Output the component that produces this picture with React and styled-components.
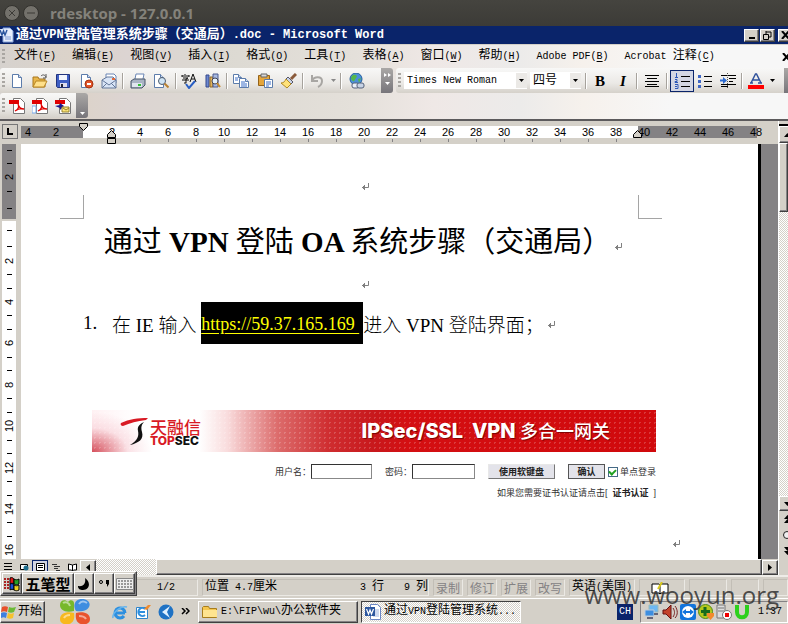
import React from "react";
import styled, { createGlobalStyle, css } from "styled-components";

const FACE = "#d4d0c8";
const NAVY = "#0a246a";
const SHADE = "#848284";
const dither = css`
  background: repeating-conic-gradient(#ffffff 0 25%, #d4d0c8 0 50%) 0 0 / 2px 2px;
`;
const raised = css`
  background: ${FACE};
  border: 1px solid;
  border-color: #ffffff #404040 #404040 #ffffff;
  box-shadow: inset -1px -1px 0 ${SHADE};
`;

const Global = createGlobalStyle`
  * { box-sizing: border-box; }
  body { margin: 0; background: ${FACE}; }
  body, button, input, select {
    font-family: "Liberation Mono", "Noto Sans CJK SC", monospace;
    font-size: 12px;
    color: #000;
  }
  button { padding: 0; border: 0; background: none; }
  svg { display: block; flex: none; }
`;

const Screen = styled.div`
  display: flex;
  flex-direction: column;
  min-height: 100vh;
  overflow: hidden;
  position: relative;
`;

/* Mixed text: half-width Latin runs beside full-width Han characters */
const Run = styled.span`
  white-space: pre;
  line-height: 16px;
`;
const Half = styled.span`
  font-size: ${(p) => p.$size || 10}px;
`;
function T({ children, size }) {
  const parts = String(children).split(/([\x20-\x7e]+)/).filter(Boolean);
  return (
    <Run>
      {parts.map((s, i) =>
        /^[\x20-\x7e]/.test(s) ? <Half key={i} $size={size}>{s}</Half> : <React.Fragment key={i}>{s}</React.Fragment>
      )}
    </Run>
  );
}

/* ---- Host window ---- */
const HostBar = styled.header`
  height: 26px;
  display: flex;
  align-items: center;
  gap: 3px;
  padding-left: 4px;
  background: linear-gradient(#45443f, #3c3b37);
`;
const HostButton = styled.button`
  width: 16px;
  height: 16px;
  border-radius: 50%;
  background: #73716b;
  border: 1px solid #33322e;
  display: grid;
  place-items: center;
`;
const HostTitle = styled.span`
  margin-left: 8px;
  font: 700 15px/20px "Open Sans", "Noto Sans", sans-serif;
  color: #84827b;
`;

/* ---- Word title ---- */
const WordBar = styled.div`
  height: 18px;
  display: flex;
  align-items: center;
  overflow: hidden;
  background: ${NAVY};
  color: #fff;
`;
const WordTitle = styled.h1`
  margin: 0 auto 0 2px;
  font-size: 13px;
  font-weight: 700;
  display: flex;
`;
const CaptionButton = styled.button`
  ${raised}
  flex: none;
  width: 15px;
  height: 13px;
  display: grid;
  place-items: center;
  margin-left: ${(p) => (p.$apart ? 3 : 1)}px;
  margin-right: ${(p) => (p.$apart ? -5 : 0)}px;
`;

const backdrop = css`
  background: linear-gradient(90deg, #d6d2ce 0, #dcd3c9 10%, #dcd4d2 16%, #dcd9d2 28%, #e4e0da 45%, #efe8e6 55%, #ecebea 66%, #f6f1ec 74%, #f7f7f7 85%);
`;
const MenuBar = styled.nav`
  ${backdrop}
  height: 24px;
  border-top: 1px solid ${FACE};
  display: flex;
  align-items: center;
  gap: 16px;
  overflow: hidden;
`;
const MenuItem = styled.button`
  flex: none;
  white-space: pre;
  line-height: 16px;
  &:first-of-type { margin-left: -10px; }
`;
const MenuClose = styled.button`
  margin-left: auto;
  margin-right: -3px;
`;
const Key = styled.u`
  text-underline-offset: 2px;
`;
const Grip = styled.i`
  flex: none;
  width: 3px;
  height: 15px;
  margin: 0 3px 0 2px;
  background: repeating-linear-gradient(#a9a6a2 0 2px, transparent 2px 4px);
`;

/* ---- Toolbars ---- */
const Dock = styled.div`
  ${backdrop}
  display: flex;
  gap: 3px;
  height: ${(p) => p.$h}px;
  overflow: hidden;
`;
const Strip = styled.div`
  display: flex;
  align-items: center;
  flex: none;
  height: 25px;
  border-radius: 3px;
  background: linear-gradient(#f8f8f7, #ebe9e6 60%, #d5d1ca);
`;
const Tool = styled.button`
  flex: none;
  width: ${(p) => p.$w || 24}px;
  height: 22px;
  display: grid;
  place-items: center;
  ${(p) => p.$on && css`background: #d3d6e3; border: 1px solid ${NAVY};`}
`;
const Letter = styled.span`
  font: 700 15px/18px "Liberation Serif", serif;
  font-style: ${(p) => (p.$italic ? "italic" : "normal")};
`;
const Rule = styled.i`
  flex: none;
  width: 2px;
  height: 16px;
  margin: 0 ${(p) => p.$m}px;
  border-left: 1px solid #a6a29c;
  border-right: 1px solid #fff;
`;
const More = styled.button`
  align-self: stretch;
  flex: none;
  width: 12px;
  margin-left: ${(p) => p.$ml || 0}px;
  border-radius: 0 3px 3px 0;
  background: linear-gradient(#aaa8a6, #77757a);
  display: flex;
  flex-direction: column;
  align-items: center;
  justify-content: ${(p) => (p.$two ? "space-evenly" : "flex-end")};
  padding-bottom: 3px;
`;
const Combo = styled.label`
  display: flex;
  align-items: center;
  height: 17px;
  width: ${(p) => p.$w}px;
  margin-right: 3px;
  background: #fff;
`;
const Select = styled.select`
  appearance: none;
  flex: 1;
  min-width: 0;
  border: 0;
  padding: 0 0 0 3px;
  background: transparent;
  font-size: ${(p) => p.$size}px;
  line-height: 16px;
`;
const ComboArrow = styled.span`
  width: 11px;
  height: 15px;
  display: grid;
  place-items: center;
  background: #ebe9e6;
`;

/* ---- Workspace ---- */
const Work = styled.div`
  flex: 1;
  display: flex;
  border-top: 2px solid #5c5a5c;
  background: ${FACE};
  overflow: hidden;
`;
const WorkMain = styled.div`
  flex: 1;
  min-width: 0;
  display: flex;
  flex-direction: column;
`;
const RulerRow = styled.div`
  height: 23px;
  display: flex;
  align-items: flex-start;
  padding-top: 5px;
  position: relative;
`;
const TabBox = styled.button`
  width: 16px;
  height: 15px;
  margin: -2px 3px 0 2px;
  border: 1px solid #777;
  display: grid;
  place-items: center;
`;
const RulerTrack = styled.div`
  flex: 1;
  display: flex;
  font: 11px/12px "Liberation Sans", sans-serif;
  background: linear-gradient(90deg, ${SHADE} 62px, #fff 62px 617px, ${SHADE} 617px 736px, ${FACE} 736px) 0 0 / 100% 12px no-repeat;
`;
const RulerCell = styled.span`
  flex: none;
  width: ${(p) => (p.$first ? 21 : 28)}px;
  padding-right: ${(p) => (p.$first ? 7 : 0)}px;
  display: flex;
  flex-direction: column;
  align-items: center;
  &::after {
    content: "";
    width: 1px;
    height: 3px;
    margin-top: 1px;
    background: ${(p) => (p.$tick ? SHADE : "transparent")};
  }
`;
const Marker = styled.span`
  position: absolute;
  left: ${(p) => p.$x}px;
  top: ${(p) => p.$y}px;
`;
const DocRow = styled.div`
  flex: 1;
  display: flex;
  min-height: 0;
`;
const VRuler = styled.div`
  width: 21px;
  padding: 0 5px 0 2px;
  display: flex;
  flex-direction: column;
  overflow: hidden;
`;
const VTop = styled.div`
  height: 75px;
  margin-bottom: 2px;
  background: ${SHADE};
  display: flex;
  flex-direction: column;
`;
const VBody = styled.div`
  height: 338px;
  background: #fff;
  flex: 1 0 auto;
  overflow: hidden;
`;
const VScale = styled.div`
  height: 350px;
  display: flex;
  flex-direction: column;
`;
const VCell = styled.div`
  flex: ${(p) => (p.$lead ? `0 0 ${p.$lead}px` : "1 1 0")};
  display: flex;
  flex-direction: column;
  align-items: center;
  justify-content: space-evenly;
  font: 11px/14px "Liberation Sans", sans-serif;
  &::before, &::after {
    content: "";
    width: 5px;
    height: 1px;
    background: #000;
  }
  &::after { display: ${(p) => (p.$lead ? "none" : "block")}; }
`;
const VNum = styled.span`
  writing-mode: vertical-rl;
  transform: rotate(180deg);
  height: 14px;
  text-align: center;
`;
const Page = styled.main`
  flex: 1;
  min-width: 0;
  background: #fff;
  border-right: 3px solid #000;
  display: flex;
  flex-direction: column;
  font-family: "Liberation Serif", "Noto Sans CJK SC", serif;
`;
const Desk = styled.div`
  width: 17px;
  background: ${SHADE};
`;
const Center = styled.div`
  height: ${(p) => p.$h}px;
  padding: 0 116px 0 63px;
  display: flex;
  align-items: center;
  justify-content: center;
`;
const Corners = styled.div`
  display: flex;
  justify-content: space-between;
  padding: 0 96px 0 39px;
`;
const Corner = styled.i`
  width: 24px;
  height: 24px;
  border-bottom: 1px solid #a5a5a5;
  ${(p) => (p.$left ? "border-right" : "border-left")}: 1px solid #a5a5a5;
`;
const DocTitle = styled.h2`
  margin: 0;
  font-size: 29px;
  line-height: 44px;
  font-weight: 700;
  white-space: nowrap;
`;
const Han = styled.span`
  font-weight: 400;
`;
const Item = styled.p`
  margin: 0 0 66px;
  padding-left: 62px;
  height: 42px;
  display: flex;
  align-items: center;
  font-size: 19px;
  font-weight: 300;
  white-space: pre;
`;
const ItemNo = styled.span`
  width: 29px;
`;
const Link = styled.a`
  align-self: stretch;
  width: 162px;
  background: #000;
  color: #ff0;
  font-size: 18px;
  font-weight: 400;
  line-height: 44px;
  text-decoration: underline 1px #ff0;
  text-underline-offset: 3px;
`;
const MarkBox = styled.span`
  padding: ${(p) => p.$pt || 0}px 0 0 3px;
`;
const LastMark = styled.div`
  display: flex;
  justify-content: flex-end;
  margin: auto 78px 11px 0;
`;

/* ---- Login picture content ---- */
const Login = styled.form`
  margin: 0 102px 0 71px;
  font: 9px "Liberation Sans", "Noto Sans CJK SC", sans-serif;
  color: #333;
`;
const Banner = styled.div`
  height: 42px;
  display: flex;
  align-items: center;
  padding: 0 46px 0 28px;
  background:
    radial-gradient(#ffffff30 1px, transparent 1px) 0 0 / 5px 5px,
    radial-gradient(ellipse 60px 40px at 0 100%, #d5505c, #f6c8d080 60%, transparent),
    linear-gradient(90deg, #fff1f3 0, #fff 8%, #fff 19%, #f9dcdd 24%, #dc6b6b 33%, #cf2d30 42%, #c8181c 50%, #d40f12 56%, #d0090c 100%);
`;
const Brand = styled.div`
  margin: 6px auto 0 2px;
  display: flex;
  flex-direction: column;
`;
const BrandHan = styled.span`
  font-size: 17px;
  line-height: 14px;
  font-weight: 500;
  color: #d81a24;
`;
const BrandLatin = styled.span`
  font: 800 12px/10px Inter, sans-serif;
  color: ${(p) => (p.$red ? "#d81a24" : "#111")};
`;
const BannerText = styled.span`
  font: 800 20px/24px Inter, "Noto Sans CJK SC", sans-serif;
  color: #fff;
  text-shadow: 1px 1px 1px #7a0000;
  white-space: pre;
`;
const BannerHan = styled.span`
  font-size: 18px;
  font-weight: 500;
`;
const FormRow = styled.div`
  display: flex;
  justify-content: flex-end;
  align-items: center;
  height: 17px;
  margin-top: 11px;
`;
const Field = styled.label`
  display: flex;
  align-items: center;
  margin-right: 13px;
`;
const TextBox = styled.input`
  width: ${(p) => p.$w}px;
  height: 15px;
  padding: 0 2px;
  border: 1px solid;
  border-color: #333 #888 #888 #333;
  background: #fff;
`;
const FormButton = styled.button`
  width: ${(p) => p.$w}px;
  height: 15px;
  margin-right: ${(p) => (p.$main ? 3 : 13)}px;
  font: 700 9px "Noto Sans CJK SC", sans-serif;
  color: #222;
  background: #e3e3ea;
  border: 1px solid;
  border-color: ${(p) => (p.$main ? "#555" : "#e8e8e8 #777 #777 #e8e8e8")};
`;
const Check = styled.input`
  appearance: none;
  margin: 0 2px 0 0;
  width: 10px;
  height: 10px;
  border: 1px solid #456a86;
  display: grid;
  place-items: center;
  &:checked::after {
    content: "";
    width: 3px;
    height: 5px;
    margin-bottom: 2px;
    border: solid #21a121;
    border-width: 0 2px 2px 0;
    transform: rotate(45deg);
  }
`;
const CertRow = styled.div`
  margin-top: 7px;
  text-align: right;
  line-height: 13px;
  white-space: pre;
`;
const CertLink = styled.a`
  color: #222;
  font-weight: 700;
  text-decoration: none;
`;

/* ---- Scroll bars ---- */
const VScroll = styled.div`
  width: 10px;
  display: flex;
  flex-direction: column;
  overflow: hidden;
  border-left: 1px solid #fff;
`;
const Split = styled.i`
  height: 5px;
  border-bottom: 2px solid #000;
`;
const ScrollButton = styled.button`
  ${raised}
  flex: none;
  width: 16px;
  height: ${(p) => p.$h || 15}px;
  display: grid;
  place-items: center;
`;
const Track = styled.div`
  ${dither}
  flex: 1;
  display: flex;
`;
const VThumb = styled.div`
  ${raised}
  width: 16px;
  height: 69px;
`;
const BrowseButton = styled.button`
  width: 16px;
  height: 16px;
  display: grid;
  place-items: center;
`;
const HRow = styled.div`
  height: 16px;
  display: flex;
  align-items: center;
`;
const ViewButton = styled.button`
  width: 16px;
  height: 15px;
  display: grid;
  place-items: center;
  ${(p) => p.$on && css`background: #d3d6e3; border: 1px solid ${NAVY};`}
`;
const HTrack = styled.div`
  ${dither}
  flex: 1;
  height: 16px;
  padding-left: 60px;
`;
const HThumb = styled.div`
  ${raised}
  height: 16px;
`;

/* ---- Status bar ---- */
const Status = styled.footer`
  height: 23px;
  display: flex;
  align-items: center;
  gap: 4px;
  border-top: 2px solid #eeece8;
  background: ${FACE};
  padding: 2px 0 2px 1px;
  overflow: hidden;
`;
const Cell = styled.span`
  flex: ${(p) => (p.$grow ? 1 : "none")};
  width: ${(p) => p.$w || 30}px;
  height: 17px;
  display: flex;
  align-items: center;
  gap: 20px;
  padding-left: ${(p) => p.$pl || 2}px;
  border: 1px solid;
  border-color: #c2beb6 #ebe9e4 #ebe9e4 #c2beb6;
  color: ${(p) => (p.$dim ? SHADE : "#000")};
`;
const Push = styled.span`
  margin-left: auto;
`;
const Ime = styled.div`
  ${raised}
  position: absolute;
  left: 0;
  bottom: 28px;
  display: flex;
  width: 137px;
  height: 25px;
  padding: 1px;
`;
const ImeButton = styled.button`
  ${raised}
  width: ${(p) => p.$w}px;
  display: grid;
  place-items: center;
  font: 700 15px/18px "Noto Sans CJK SC", sans-serif;
`;

/* ---- Task bar ---- */
const TaskBar = styled.footer`
  height: 26px;
  display: flex;
  align-items: center;
  background: ${FACE};
  border-top: 1px solid #fff;
`;
const Start = styled.button`
  ${raised}
  width: 45px;
  height: 22px;
  display: flex;
  align-items: center;
  gap: 1px;
`;
const Quick = styled.div`
  display: flex;
  align-items: center;
  gap: 7px;
  margin: 0 3px 0 15px;
  width: 135px;
`;
const Launch = styled.button`
  flex: none;
  margin-right: ${(p) => p.$mr || 0}px;
`;
const Task = styled.button`
  ${raised}
  flex: 0 1 160px;
  height: 22px;
  margin-right: 3px;
  padding-left: 3px;
  display: flex;
  align-items: center;
  gap: 3px;
  ${(p) => p.$on && css`${dither} border-color: #404040 #fff #fff #404040; box-shadow: none;`}
`;
const Lang = styled.button`
  margin-left: auto;
  width: 16px;
  height: 16px;
  background: ${NAVY};
  color: #fff;
  font-size: 10px;
`;
const Tray = styled.div`
  margin-left: 7px;
  width: 148px;
  height: 22px;
  display: flex;
  align-items: center;
  gap: 2px;
  padding: 0 5px 0 3px;
  border: 1px solid;
  border-color: ${SHADE} #fff #fff ${SHADE};
`;
const Clock = styled.time`
  margin-left: auto;
  font-size: 10px;
`;
const Watermark = styled.div`
  position: absolute;
  right: 9px;
  bottom: 11px;
  font: 24px/36px "Open Sans", "Noto Sans", sans-serif;
  color: #333;
  opacity: 0.85;
  pointer-events: none;
`;

/* ---- Drawings ---- */
const Svg = ({ s = 16, w, h, children }) => (
  <svg width={w || s} height={h || s} viewBox={`0 0 ${w || s} ${h || s}`} fill="none" aria-hidden="true">
    {children}
  </svg>
);
const Down = ({ c = "#000" }) => <Svg w={5} h={3}><path d="M0 0h5L2.500 3z" fill={c} /></Svg>;
const Return = () => (
  <Svg w={8} h={8}><path d="M7.500 0v4.500H1M3.500 2v5M2.500 3v3" stroke="#808080" /></Svg>
);
const Sheet = ({ x = 3, y = 1, w = 10, h = 14 }) => (
  <g>
    <path d={`M${x + 0.5} ${y + 0.5}h${w - 4}l3 3v${h - 4}h-${w - 1}z`} fill="#fff" stroke="#5c7cab" />
    <path d={`M${x + w - 3.5} ${y + 0.5}v3h3`} fill="#cfdcf2" stroke="#5c7cab" />
  </g>
);
const I = {
  blank: <Svg><Sheet /></Svg>,
  open: <Svg><path d="M1 4h5l1 2h6v8H1z" fill="#e8b64a" stroke="#a8761d" /><path d="M1 14l3-6h11l-3 6z" fill="#ffe08a" stroke="#b88624" /><path d="M9 3c2-2 4-1 5 1M14 1v4h-3" stroke="#555" /></Svg>,
  save: <Svg><path d="M1.500 1.500h13v13h-12l-1-1z" fill="#3f5fc4" stroke="#22347e" /><path d="M4 2h8v5H4z" fill="#f2f5fd" /><path d="M5 10h7v4H5z" fill="#dde" /><path d="M6 11h2v3H6z" fill="#223" /></Svg>,
  deny: <Svg><Sheet /><circle cx="11" cy="11" r="4" fill="#e2542a" stroke="#a6330f" /><path d="M9 11h4" stroke="#fff" strokeWidth="2" /></Svg>,
  mail: <Svg><path d="M5 5V1h8l2 2v7" fill="#fff" stroke="#6a86b5" /><path d="M1 7l5-3h6l3 3v8H1z" fill="#d8e4f6" stroke="#64789b" /><path d="M1 7l7 5 7-5M1 15l5-5M15 15l-5-5" stroke="#64789b" /><path d="M11 5h3v2h-3z" fill="#e36b3c" /></Svg>,
  print: <Svg><path d="M5 6l1-5h8l-1 5" fill="#fff" stroke="#6a86b5" /><path d="M1 8l3-2h11v6l-3 3H1z" fill="#a9b4c4" stroke="#475468" /><path d="M2 10h10v4H2z" fill="#dfe6ee" /><path d="M8 11h3v2H8z" fill="#2fc12f" /></Svg>,
  preview: <Svg><Sheet x={1} /><circle cx="9" cy="8" r="3.500" fill="#cfe4f5" stroke="#4c5a6c" /><path d="M11.500 10.500l4 4" stroke="#b98132" strokeWidth="2" /></Svg>,
  spell: <Svg><path d="M1 3h7M1 2v2M8 2v2M4 1v1M2 5h5L5 6v4H3M1 7h7M9 9l3-8 3 8M10 6h4" stroke="#111" /><path d="M5 11l3 4 6-7" stroke="#2a5fc4" strokeWidth="2" /></Svg>,
  research: <Svg><path d="M1 2h3v12H1z" fill="#6c88d0" stroke="#34488c" /><path d="M5 4h3v10H5z" fill="#e5b65b" stroke="#8a672a" /><path d="M8 1h5v13H8z" fill="#a8b9e0" stroke="#4a5b8f" /><circle cx="10" cy="8" r="3" fill="#e2f0fb" stroke="#445" /><path d="M12 10l3 4" stroke="#c58a30" strokeWidth="2" /></Svg>,
  copy: <Svg><Sheet x={0} y={1} w={9} h={10} /><Sheet x={6} y={5} w={10} h={10} /><path d="M8 9h4M8 11h6M8 13h6M2 5h3M2 7h3" stroke="#3d6fc8" /></Svg>,
  paste: <Svg><path d="M1.500 2.500h11v10h-11z" fill="#e4a53c" stroke="#94631a" /><path d="M4 1h6v3H4z" fill="#d9d9d9" stroke="#666" /><path d="M7.500 6.500h8v8h-8z" fill="#fff" stroke="#5c7cab" /><path d="M9 9h5M9 11h5M9 13h3" stroke="#3d6fc8" /></Svg>,
  brush: <Svg><path d="M15 1l-5 5" stroke="#8a5a3a" strokeWidth="3" /><path d="M7 4l5 5-2 2-5-5z" fill="#c9d2e6" stroke="#556" /><path d="M5 6l5 5-4 4-6-5c3 0 4-2 5-4z" fill="#ffe27a" stroke="#b08a25" /></Svg>,
  undo: <Svg><path d="M3 2v6h6M3 8c2-5 10-5 10 0 0 3-2 5-4 6" stroke="#a8a6a3" strokeWidth="2" /></Svg>,
  globe: <Svg><circle cx="7" cy="6" r="6" fill="#4b8fd8" stroke="#24609c" /><path d="M4 2c3-1 5 1 3 3s-1 4-3 3-3-4 0-6zM9 6l3-1-2 5z" fill="#54b848" /><rect x="3" y="10" width="7" height="5" rx="2" stroke="#54617a" fill="#e9eef7" /><rect x="8" y="10" width="7" height="5" rx="2" stroke="#54617a" fill="#c7d3e6" /></Svg>,
  align: <Svg><path d="M1 2.500h14M3 5.500h10M1 8.500h14M3 11.500h10M1 13.500h14" stroke="#000" /></Svg>,
  numbers: <Svg><path d="M7 3.500h9M7 8.500h9M7 13.500h9" stroke="#000" /><path d="M2.500 0v4M1 4.500h3M1 6.500h2v2H1v1h3M1 11.500h3v4H1M1 13.500h2" stroke="#2c57b8" /></Svg>,
  bullets: <Svg><path d="M7 3.500h8M7 8.500h8M7 13.500h8" stroke="#000" /><path d="M1 2h3v3H1zM1 7h3v3H1zM1 12h3v3H1z" fill="#3f66c4" /></Svg>,
  indent: <Svg><path d="M0 7.500h4" stroke="#2c6ad0" strokeWidth="2" /><path d="M3 4l4 3.500L3 11z" fill="#2c6ad0" /><path d="M1 2.500h15M9 5.500h7M9 8.500h4M1 11.500h15M1 13.500h7" stroke="#000" /><path d="M7.500 0v16" stroke="#555" strokeDasharray="1 1" /></Svg>,
  pdf: <Svg><path d="M4.500 .5h7l4 4v11h-11z" fill="#fff" stroke="#777" /><path d="M0 2h10v4H0z" fill="#e00000" /><path d="M6 13c4-2 4-5 3-7 1 4 3 5 6 5-4-1-6 0-9 2z" stroke="#e00000" strokeWidth="1.300" /></Svg>,
  word: <Svg><path d="M5.500 .5h7l3 3v12h-10z" fill="#fff" stroke="#6a86c5" /><path d="M8 6h6M8 8h6M8 10h6M8 12h6" stroke="#9bb2e0" /><path d="M0 3h10v9H0z" fill="#2b569e" /><path d="M1.500 5l2 5L5 6l1.500 4 2-5" stroke="#fff" strokeWidth="1.200" /></Svg>,
  folder: <Svg><path d="M.5 3.500l1-1h5l1 2h7v9H.5z" fill="#f5c64d" stroke="#a87d1c" /><path d="M1 6h14v7H1z" fill="#ffe48f" /></Svg>,
  win: <Svg><path d="M1 3c2-1 4-1 6 0L6 8C4 7 2 7 0 8z" fill="#e8502a" /><path d="M8 3c2 1 4 1 7 0l-2 5c-2 1-4 1-6 0z" fill="#6cba35" /><path d="M0 9c2-1 4-1 6 0l-1 5c-2-1-3-1-5 0z" fill="#3f7fe0" /><path d="M7 9c2 1 4 1 6 0l-1 5c-2 1-4 1-6 0z" fill="#f6c12c" /></Svg>,
};

const PdfOpt = ({ kind }) => (
  <Svg>
    <path d="M4.500 .5h7l4 4v11h-11z" fill="#fff" stroke="#777" /><path d="M0 2h10v4H0z" fill="#e00000" />
    {kind === 1 ? <><path d="M6 13c4-2 4-5 3-7 1 4 3 5 6 5-4-1-6 0-9 2z" stroke="#e00000" strokeWidth="1.300" /><path d="M0 8h4v7H0z" fill="#fff" stroke="#79a8e8" /></>
      : <><path d="M0 8l5-1V5l4 3-4 4v-2z" fill="#1b1b8c" /><path d="M7 9h7v5H7z" fill="#ffe87a" stroke="#94802a" /><path d="M8 10l3 2 3-2" stroke="#94802a" /></>}
  </Svg>
);

const menus = [["文件", "F"], ["编辑", "E"], ["视图", "V"], ["插入", "I"], ["格式", "O"], ["工具", "T"], ["表格", "A"], ["窗口", "W"], ["帮助", "H"], ["Adobe PDF", "B"], ["Acrobat 注释", "C"]];
const hNumbers = [4, 2, "", ...Array.from({ length: 24 }, (_, i) => (i + 1) * 2)];

const Close = () => <Svg w={9} h={8}><path d="M1 0l7 8M8 0L1 8" stroke="#000" strokeWidth="2" /></Svg>;

function WorkArea() {
  return (
    <Work>
      <WorkMain>
        <RulerRow>
          <TabBox aria-label="制表符"><Svg w={8} h={8}><path d="M2 0v6h5" stroke="#000" strokeWidth="2" /></Svg></TabBox>
          <RulerTrack>
            {hNumbers.map((n, i) => <RulerCell key={i} $first={i === 0} $tick={i > 3 && i < 22}>{n === "" ? "\u00a0" : n}</RulerCell>)}
          </RulerTrack>
          <Marker $x={79} $y={2}><Svg w={9} h={8}><path d="M.5 .5h8v3l-4 4-4-4z" fill={FACE} stroke="#000" /></Svg></Marker>
          <Marker $x={107} $y={8}><Svg w={9} h={15}><path d="M.5 8.500v-3l4-4 4 4v3zM.5 9.500h8v5h-8z" fill={FACE} stroke="#000" /></Svg></Marker>
          <Marker $x={633} $y={9}><Svg w={9} h={8}><path d="M.5 7.500v-3l4-4 4 4v3z" fill={FACE} stroke="#000" /></Svg></Marker>
        </RulerRow>
        <DocRow>
          <VRuler>
            <VTop><VCell $lead={12} /><VCell><VNum>2</VNum></VCell><VCell $lead={21} /></VTop>
            <VBody>
              <VScale>
                <VCell $lead={19} />
                {[2, 4, 6, 8, 10, 12, 14, 16].map((n) => <VCell key={n}><VNum>{n}</VNum></VCell>)}
              </VScale>
            </VBody>
          </VRuler>
          <Page>
            <Center $h={51}><MarkBox $pt={35}><Return /></MarkBox></Center>
            <Corners><Corner $left /><Corner /></Corners>
            <Center $h={45}>
              <DocTitle><Han>通过</Han> VPN <Han>登陆</Han> OA <Han>系统步骤（交通局）</Han></DocTitle>
              <MarkBox $pt={10}><Return /></MarkBox>
            </Center>
            <Center $h={38}><MarkBox $pt={3}><Return /></MarkBox></Center>
            <Item>
              <ItemNo>1.</ItemNo>在 IE 输入 <Link href="https://59.37.165.169">https://59.37.165.169 </Link>进入 VPN 登陆界面；<MarkBox $pt={4}><Return /></MarkBox>
            </Item>
            <Login onSubmit={(e) => e.preventDefault()}>
              <Banner>
                <Svg w={28} h={28}><path d="M1 6C9 2 18 1 28 1L26 3C17 4 10 6 3 9 1 9 0 7 1 6z" fill="#d81a24" /><path d="M24 5c-4 2-7 4-6 9 1 5 0 9-8 14 9-2 14-6 12-13-1-4-1-7 2-10z" fill="#111" /></Svg>
                <Brand>
                  <BrandHan>天融信</BrandHan>
                  <span><BrandLatin $red>TOP</BrandLatin><BrandLatin>SEC</BrandLatin></span>
                </Brand>
                <BannerText>IPSec/SSL  VPN <BannerHan>多合一网关</BannerHan></BannerText>
              </Banner>
              <FormRow>
                <Field>用户名：<TextBox $w={61} type="text" /></Field>
                <Field>密码：<TextBox $w={63} type="password" /></Field>
                <FormButton type="button" $w={67}>使用软键盘</FormButton>
                <FormButton type="submit" $w={37} $main>确认</FormButton>
                <Check id="single" type="checkbox" defaultChecked /><label htmlFor="single">单点登录</label>
              </FormRow>
              <CertRow>如果您需要证书认证请点击[  <CertLink href="#cert">证书认证</CertLink>  ]</CertRow>
            </Login>
            <LastMark><Return /></LastMark>
          </Page>
          <Desk />
        </DocRow>
        <HRow>
          <ViewButton aria-label="普通视图"><Svg w={8} h={8}><path d="M0 .5h8M0 3.500h8M0 6.500h8" stroke="#000" /></Svg></ViewButton>
          <ViewButton aria-label="Web 版式"><Svg w={9} h={8}><path d="M.5 1.500h7v5h-7z" fill="#fff" stroke="#000" /><circle cx="6" cy="5" r="2.500" fill="#1c6c8c" /></Svg></ViewButton>
          <ViewButton $on aria-label="页面视图"><Svg w={9} h={8}><path d="M.5 .5h8v7h-8z" fill="#fff" stroke="#000" /><path d="M2 2.500h5M2 4.500h5" stroke="#000" /></Svg></ViewButton>
          <ViewButton aria-label="大纲视图"><Svg w={8} h={8}><path d="M0 1.500h5M2 3.500h6M2 5.500h4M4 7.500h4" stroke="#333" /></Svg></ViewButton>
          <ViewButton aria-label="阅读版式"><Svg w={9} h={8}><path d="M.5 1l4 1 4-1v6h-3l-1 1-1-1h-3zM4.500 2v6" fill="#fff" stroke="#000" /></Svg></ViewButton>
          <ScrollButton aria-label="向左"><Svg w={4} h={7}><path d="M4 0v7L0 3.500z" fill="#000" /></Svg></ScrollButton>
          <HTrack><HThumb /></HTrack>
          <ScrollButton aria-label="向右"><Svg w={4} h={7}><path d="M0 0v7l4-3.500z" fill="#000" /></Svg></ScrollButton>
        </HRow>
      </WorkMain>
      <VScroll>
        <Split />
        <ScrollButton $h={17} aria-label="向上"><Svg w={7} h={4}><path d="M0 4h7L3.500 0z" fill="#000" /></Svg></ScrollButton>
        <Track><VThumb /></Track>
        <ScrollButton aria-label="向下"><Svg w={7} h={4}><path d="M0 0h7L3.500 4z" fill="#000" /></Svg></ScrollButton>
        <BrowseButton aria-label="上一页"><Svg w={7} h={8}><path d="M0 4h7L3.500 0zM0 8h7L3.500 4z" fill="#000" /></Svg></BrowseButton>
        <BrowseButton aria-label="选择浏览对象"><Svg w={8} h={8}><circle cx="4" cy="4" r="3.500" fill="#eee" stroke="#222" /></Svg></BrowseButton>
        <BrowseButton aria-label="下一页"><Svg w={7} h={8}><path d="M0 0h7L3.500 4zM0 4h7L3.500 8z" fill="#000" /></Svg></BrowseButton>
        <HRow />
      </VScroll>
    </Work>
  );
}

export default function App() {
  return (
    <Screen>
      <Global />
      <HostBar>
        <HostButton aria-label="关闭"><Svg w={6} h={6}><path d="M0 0l6 6M6 0L0 6" stroke="#3c3b37" /></Svg></HostButton>
        <HostButton aria-label="最小化"><Svg w={8} h={2}><path d="M0 1h8" stroke="#3c3b37" /></Svg></HostButton>
        <HostTitle>rdesktop - 127.0.0.1</HostTitle>
      </HostBar>
      <WordBar>
        <Svg w={14} h={16}><path d="M3 1h7l3 3v11H3z" fill="#e8effc" stroke="#89a6dc" /><path d="M5 10h6M5 12h6" stroke="#7c9ad6" /><path d="M0 2h8v7H0z" fill="#dce6fa" /><path d="M0 3l2 5 1.500-4L5 8l2-5" stroke="#2b569e" strokeWidth="1.400" /></Svg>
        <WordTitle><T size={12}>通过VPN登陆管理系统步骤（交通局）.doc - Microsoft Word</T></WordTitle>
        <CaptionButton aria-label="最小化"><Svg w={8} h={8}><path d="M1 7h6" stroke="#000" strokeWidth="2" /></Svg></CaptionButton>
        <CaptionButton aria-label="还原"><Svg w={9} h={9}><path d="M3 1h5v5H6M3 0v3M.5 3.500h5v5h-5z" stroke="#000" /></Svg></CaptionButton>
        <CaptionButton $apart aria-label="关闭"><Close /></CaptionButton>
      </WordBar>
      <MenuBar>
        <Grip />
        {menus.map(([name, key]) => (
          <MenuItem key={key}><T>{name + "("}</T><Half><Key>{key}</Key>)</Half></MenuItem>
        ))}
        <MenuClose aria-label="关闭文档"><Close /></MenuClose>
      </MenuBar>
      <Dock $h={25}>
        <Strip>
          <Grip />
          <Tool $w={17} aria-label="新建">{I.blank}</Tool>
          <Tool $w={30} aria-label="打开">{I.open}</Tool>
          <Tool $w={16} aria-label="保存">{I.save}</Tool>
          <Tool $w={30} aria-label="权限">{I.deny}</Tool>
          <Tool $w={16} aria-label="电子邮件">{I.mail}</Tool>
          <Rule $m={5} />
          <Tool $w={18} aria-label="打印">{I.print}</Tool>
          <Tool $w={28} aria-label="预览">{I.preview}</Tool>
          <Rule $m={0} />
          <Tool aria-label="拼写">{I.spell}</Tool>
          <Tool aria-label="信息检索">{I.research}</Tool>
          <Rule $m={1} />
          <Tool aria-label="复制">{I.copy}</Tool>
          <Tool aria-label="粘贴">{I.paste}</Tool>
          <Tool aria-label="格式刷">{I.brush}</Tool>
          <Rule $m={1} />
          <Tool aria-label="撤消">{I.undo}</Tool>
          <Tool $w={8} aria-label="撤消列表"><Down c="#888" /></Tool>
          <Rule $m={3} />
          <Tool aria-label="超链接">{I.globe}</Tool>
          <More $two $ml={12} aria-label="工具栏选项"><Svg w={7} h={4}><path d="M0 0l3 2-3 2zM4 0l3 2-3 2z" fill="#fff" /></Svg><Down c="#fff" /></More>
        </Strip>
        <Strip>
          <Grip />
          <Combo $w={123}>
            <Select $size={10} aria-label="字体"><option>Times New Roman</option></Select>
            <ComboArrow><Down /></ComboArrow>
          </Combo>
          <Combo $w={51}>
            <Select $size={12} aria-label="字号"><option>四号</option></Select>
            <ComboArrow><Down /></ComboArrow>
          </Combo>
          <Rule $m={1} />
          <Tool aria-label="加粗"><Letter>B</Letter></Tool>
          <Tool $w={22} aria-label="倾斜"><Letter $italic>I</Letter></Tool>
          <Rule $m={2} />
          <Tool aria-label="居中">{I.align}</Tool>
          <Rule $m={2} />
          <Tool $on aria-label="编号">{I.numbers}</Tool>
          <Tool $w={22} aria-label="项目符号">{I.bullets}</Tool>
          <Tool aria-label="增加缩进">{I.indent}</Tool>
          <Rule $m={1} />
          <Tool aria-label="字体颜色"><Svg><path d="M3 10L7.500 1h1L13 10M5 7h6M2 10h3M10 10h4" stroke="#31529c" strokeWidth="1.500" /><path d="M0 12h16v4H0z" fill="#f00" /></Svg></Tool>
          <Tool $w={8} aria-label="颜色列表"><Down /></Tool>
          <More $ml={8} aria-label="格式选项" />
        </Strip>
      </Dock>
      <Dock $h={26}>
        <Strip>
          <Grip />
          <Tool $w={18} aria-label="转换为 PDF">{I.pdf}</Tool>
          <Tool $w={28} aria-label="PDF 设置"><PdfOpt kind={1} /></Tool>
          <Tool $w={18} aria-label="PDF 邮件"><PdfOpt kind={2} /></Tool>
          <More $ml={4} aria-label="PDF 选项"><Down c="#fff" /></More>
        </Strip>
      </Dock>
      <WorkArea />
      <Status>
        <Cell $w={197} $pl={155}><T>1/2</T></Cell>
        <Cell $grow><T>位置 4.7厘米</T><Push><T>3 行</T></Push><T>9 列</T></Cell>
        <Cell $dim>录制</Cell>
        <Cell $dim>修订</Cell>
        <Cell $dim>扩展</Cell>
        <Cell $dim>改写</Cell>
        <Cell $w={66}><T>英语(美国)</T></Cell>
        <Cell $w={46} $pl={11}><Svg w={18} h={12}><path d="M1 2h7l1 1 1-1h7v9h-7l-1 1-1-1H1zM9 3v8" fill="#fff" stroke="#000" /><path d="M11 0L7 7" stroke="#d8c81c" strokeWidth="2" /></Svg></Cell>
        <Cell $w={38} />
        <Cell $w={28} />
        <Cell $w={25} />
      </Status>
      <TaskBar>
        <Start>{I.win}<T>开始</T></Start>
        <Quick>
          <Launch $mr={15} aria-label="Office">
            <Svg w={30} h={26}><path d="M14 12C5 14 0 11 0 6 0 1 5 0 8 3c2-3 6-2 6 1z" fill="#77b82a" /><path d="M16 12C12 5 16 0 22 0s9 4 7 8-8 5-13 4z" fill="#3f8de0" /><path d="M14 14C6 12 0 15 0 20s5 6 9 5 6-5 5-11z" fill="#f8b81e" /><path d="M16 14c8-2 14 1 14 6s-5 6-9 5-6-5-5-11z" fill="#e9532c" /><path d="M3 4c3-2 6 0 7 3M19 5c2-3 5-3 8-1M4 19c1-2 3-3 6-3M19 17c3 0 6 1 7 3" stroke="#ffffff80" strokeWidth="2" /></Svg>
          </Launch>
          <Launch aria-label="Internet Explorer"><Svg><path d="M13 9H4M13 9a5 5 0 1 0-1 3" stroke="#2d8fdf" strokeWidth="3" /><path d="M1 14C0 9 9 1 15 3" stroke="#64b4ee" strokeWidth="1.500" /></Svg></Launch>
          <Launch aria-label="Outlook"><Svg><path d="M1.500 3.500h11v11h-11z" fill="#fff" stroke="#2f83c8" /><path d="M10 5a4 4 0 1 0 0 6M4 8h6" stroke="#2d8fdf" strokeWidth="2" /><path d="M9 5l4-4h3l-4 5z" fill="#f08a2c" /></Svg></Launch>
          <Launch aria-label="桌面"><Svg><circle cx="8" cy="8" r="7.500" fill="#1f72c4" /><path d="M12 2L4 8l8 6-3-6z" fill="#dff0ff" /></Svg></Launch>
          <Launch aria-label="更多"><Svg w={9} h={7}><path d="M1 0l3 3-3 3M5 0l3 3-3 3" stroke="#000" strokeWidth="1.500" /></Svg></Launch>
        </Quick>
        <Task>{I.folder}<T>E:\FIP\wu\办公软件夹</T></Task>
        <Task $on>{I.word}<T>通过VPN登陆管理系统...</T></Task>
        <Lang>CH</Lang>
        <Tray>
          <Svg><path d="M5 1h9v7H5z" fill="#6cb8f4" stroke="#9bb" /><path d="M1 6h9v6H1z" fill="#3d8fe0" stroke="#bcd" /><path d="M3 14h6M10 10h4" stroke="#667" strokeWidth="2" /></Svg>
          <Svg><path d="M1 6h3l5-5v14l-5-5H1z" fill="#c4442c" stroke="#611" /><path d="M11 4c2 3 2 6 0 9M13 2c3 4 3 9 0 12" stroke="#722" /></Svg>
          <Svg><rect width="16" height="16" rx="2" fill="#1274dc" /><circle cx="8" cy="8" r="6" fill="#fff" /><path d="M2 8l4-3v2h4V5l4 3-4 3V9H6v2z" fill="#1274dc" /></Svg>
          <Svg><circle cx="7.500" cy="7.500" r="7" fill="#b5c81c" stroke="#4e8a1a" /><path d="M7 3v9M3 7.500h9" stroke="#176b1c" strokeWidth="3" /><path d="M9 9h7v3l-3.500 4L9 12z" fill="#f28a2c" /></Svg>
          <Svg><path d="M1 1h8v13H1z" fill="#ddd" stroke="#777" /><path d="M2 4h6M2 7h6" stroke="#777" /><circle cx="11" cy="11" r="4.500" fill="#fff" stroke="#777" /><path d="M9 9h4v4H9z" fill="#e00" /></Svg>
          <Svg><path d="M3 1v7c0 7 10 7 10 0V1" stroke="#2ed01c" strokeWidth="4" /></Svg>
          <Clock>1:37</Clock>
        </Tray>
      </TaskBar>
      <Ime>
        <ImeButton $w={20} aria-label="输入法"><Svg><path d="M6 2c2-1 3 0 4 1v5c-1-1-3-1-4 0z" fill="#e01818" stroke="#000" /><path d="M10 3c2 1 3 1 5 0v5c-2 1-3 1-5 0z" fill="#26a026" stroke="#000" /><path d="M6 8c2-1 3 0 4 1v5c-1-1-3-1-4 0z" fill="#1c50d8" stroke="#000" /><path d="M10 9c2 1 3 1 5 0v5c-2 1-3 1-5 0z" fill="#f0d020" stroke="#000" /><path d="M0 3h5M0 6h5M0 9h5M0 12h5" stroke="#a22" strokeDasharray="2 1" strokeWidth="2" /></Svg></ImeButton>
        <ImeButton $w={52}>五笔型</ImeButton>
        <ImeButton $w={20} aria-label="半角"><Svg w={12} h={12}><path d="M7 0c6 4 5 12-2 12-3 0-5-1-5-4 6 1 8-3 7-8z" fill="#000" /></Svg></ImeButton>
        <ImeButton $w={20} aria-label="标点"><Svg w={11} h={8}><circle cx="2" cy="2" r="1.500" stroke="#000" /><path d="M7 0h3v4l-2 3 0-3H7z" fill="#000" /></Svg></ImeButton>
        <ImeButton $w={21} aria-label="软键盘"><Svg w={18} h={14}><path d="M.5 1.500h17v11H.5z" fill="#eee" stroke="#888" /><path d="M2 4h14M2 7h14M2 10h14" stroke="#999" strokeWidth="2" strokeDasharray="2 1" /></Svg></ImeButton>
      </Ime>
      <Watermark>www.wooyun.org</Watermark>
    </Screen>
  );
}
